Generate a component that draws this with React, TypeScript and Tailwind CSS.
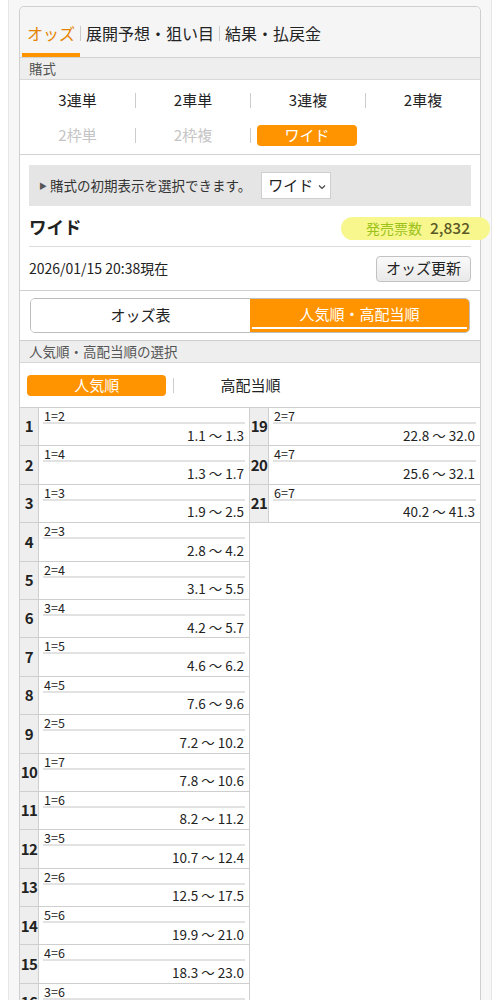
import React from "react";

const FONT = { fontFamily: '"Noto Sans CJK JP", "Noto Sans", sans-serif' };

type Row = { rank: number; combo: string; odds: string };

const left: Row[] = [
  { rank: 1, combo: "1=2", odds: "1.1 〜 1.3" },
  { rank: 2, combo: "1=4", odds: "1.3 〜 1.7" },
  { rank: 3, combo: "1=3", odds: "1.9 〜 2.5" },
  { rank: 4, combo: "2=3", odds: "2.8 〜 4.2" },
  { rank: 5, combo: "2=4", odds: "3.1 〜 5.5" },
  { rank: 6, combo: "3=4", odds: "4.2 〜 5.7" },
  { rank: 7, combo: "1=5", odds: "4.6 〜 6.2" },
  { rank: 8, combo: "4=5", odds: "7.6 〜 9.6" },
  { rank: 9, combo: "2=5", odds: "7.2 〜 10.2" },
  { rank: 10, combo: "1=7", odds: "7.8 〜 10.6" },
  { rank: 11, combo: "1=6", odds: "8.2 〜 11.2" },
  { rank: 12, combo: "3=5", odds: "10.7 〜 12.4" },
  { rank: 13, combo: "2=6", odds: "12.5 〜 17.5" },
  { rank: 14, combo: "5=6", odds: "19.9 〜 21.0" },
  { rank: 15, combo: "4=6", odds: "18.3 〜 23.0" },
  { rank: 16, combo: "3=6", odds: "20.6 〜 25.8" },
  { rank: 17, combo: "5=7", odds: "21.4 〜 28.7" },
  { rank: 18, combo: "3=7", odds: "22.1 〜 30.5" },
];

const right: Row[] = [
  { rank: 19, combo: "2=7", odds: "22.8 〜 32.0" },
  { rank: 20, combo: "4=7", odds: "25.6 〜 32.1" },
  { rank: 21, combo: "6=7", odds: "40.2 〜 41.3" },
];

function OddsRow({ r }: { r: Row }) {
  return (
    <div className="flex h-[38.4px] border-b border-[#cfcfcf]">
      <div className="w-[19px] shrink-0 bg-[#eeeeee] border-r border-[#cfcfcf] flex items-center justify-center text-[15px] font-bold text-[#222] tracking-[-0.5px]">
        {r.rank}
      </div>
      <div className="flex-1 flex flex-col px-[4px]">
        <div className="h-[16px] text-[12.5px] leading-[16px] text-[#222] border-b-2 border-[#e2e2e2] pl-[1px]">
          {r.combo}
        </div>
        <div className="flex-1 flex items-center justify-end text-[13.5px] text-[#222] pr-[1px]">
          {r.odds}
        </div>
      </div>
    </div>
  );
}

function Sep() {
  return <span className="w-px h-[15px] bg-[#cccccc]" />;
}

export default function App() {
  return (
    <div className="min-h-[1000px] bg-white px-[8px]" style={FONT}>
      <div className="min-h-[1000px] bg-[#f7f7f7] border-x border-[#e6e6e6] px-[10px] pt-[6px]">
        <div className="bg-white border border-[#cfcfcf] rounded-t-[5px] min-h-[1000px] overflow-visible">
          {/* Tabs */}
          <div className="h-[51px] bg-[#f5f5f5] border-b border-[#d3d3d3] rounded-t-[5px] flex items-stretch pl-[2px]">
            <div className="pt-[6px] px-[5px] border-b-4 border-[#ff9400] flex items-center text-[16px] text-[#e48400]">
              オッズ
            </div>
            <div className="flex items-center pt-[2px]"><Sep /></div>
            <div className="pt-[6px] px-[5px] border-b-4 border-transparent flex items-center text-[16px] text-[#222]">
              展開予想・狙い目
            </div>
            <div className="flex items-center pt-[2px]"><Sep /></div>
            <div className="pt-[6px] px-[5px] border-b-4 border-transparent flex items-center text-[16px] text-[#222]">
              結果・払戻金
            </div>
          </div>

          {/* 賭式 header */}
          <div className="h-[22px] bg-[#eeeeee] border-b border-[#d8d8d8] flex items-center px-[9px] text-[13.5px] text-[#555]">
            賭式
          </div>

          {/* Bet types */}
          <div className="h-[75px] border-b border-[#d3d3d3] pt-[3px]">
            <div className="grid grid-cols-4 h-[35px] items-center text-[15px] text-[#222]">
              <div className="flex justify-center">3連単</div>
              <div className="flex items-center"><Sep /><span className="flex-1 text-center">2車単</span></div>
              <div className="flex items-center"><Sep /><span className="flex-1 text-center">3連複</span></div>
              <div className="flex items-center"><Sep /><span className="flex-1 text-center">2車複</span></div>
            </div>
            <div className="grid grid-cols-4 h-[35px] items-center text-[15px]">
              <div className="flex justify-center text-[#c4c4c4]">2枠単</div>
              <div className="flex items-center text-[#c4c4c4]"><Sep /><span className="flex-1 text-center">2枠複</span></div>
              <div className="flex items-center">
                <Sep />
                <span className="flex-1 ml-[6px] mr-[8px] h-[21px] rounded-[4px] bg-[#ff9400] text-white flex items-center justify-center">
                  ワイド
                </span>
              </div>
              <div />
            </div>
          </div>

          {/* Select area */}
          <div className="h-[136px] border-b border-[#cfcfcf] px-[9px] pt-[10px]">
            <div className="h-[41px] bg-[#e5e5e5] flex items-center pl-[10px]">
              <span className="text-[8px] text-[#555] mr-[3px]">▶</span>
              <span className="text-[13.5px] text-[#333]">賭式の初期表示を選択できます。</span>
              <div className="ml-[10px] h-[27px] w-[70px] bg-white border border-[#cfcfcf] flex items-center pl-[6px] text-[15px] text-[#222]">
                ワイド
                <svg width="10" height="10" viewBox="0 0 10 10" className="ml-[4px] mt-[2px]">
                  <path d="M2 3.5 L5 6.5 L8 3.5" fill="none" stroke="#444" strokeWidth="1.2" />
                </svg>
              </div>
            </div>
            <div className="h-[41px] flex items-center justify-between border-b border-[#dddddd]">
              <span className="text-[17.5px] font-bold text-[#222] pt-[3px]">ワイド</span>
              <span className="-mr-[19px] mt-[4px] h-[23px] pl-[25px] pr-[20px] rounded-full bg-[#f8f78e] flex items-center">
                <span className="text-[14px] text-[#9cc21a]">発売票数</span>
                <span className="ml-[8px] text-[15.5px] font-medium text-[#5a5826]">2,832</span>
              </span>
            </div>
            <div className="h-[43px] flex items-center justify-between">
              <span className="text-[14px] text-[#222]">2026/01/15 20:38現在</span>
              <button className="h-[26px] w-[95px] rounded-[4px] border border-[#c2c2c2] bg-gradient-to-b from-[#fafafa] to-[#e9e9e9] text-[15px] text-[#222] flex items-center justify-center">
                オッズ更新
              </button>
            </div>
          </div>

          {/* Toggle */}
          <div className="h-[50px] border-b border-[#cfcfcf] px-[10px] pt-[7px]">
            <div className="h-[35px] rounded-[5px] border border-[#bdbdbd] flex overflow-hidden">
              <div className="flex-1 flex items-center justify-center text-[15px] text-[#222] bg-white">
                オッズ表
              </div>
              <div className="flex-1 flex flex-col bg-[#ff9400]">
                <div className="flex-1 flex items-center justify-center text-[15px] text-white pt-[2px]">
                  人気順・高配当順
                </div>
                <div className="h-[2px] bg-white mx-[2px] mb-[3px]" />
              </div>
            </div>
          </div>

          {/* header 2 */}
          <div className="h-[22px] bg-[#eeeeee] border-b border-[#d8d8d8] flex items-center px-[9px] text-[13.5px] text-[#555]">
            人気順・高配当順の選択
          </div>

          {/* popularity selector */}
          <div className="h-[44px] grid grid-cols-3 items-center">
            <div className="flex items-center pl-[7px] pr-[7px]">
              <span className="flex-1 h-[21px] rounded-[4px] bg-[#ff9400] text-white text-[15px] flex items-center justify-center">
                人気順
              </span>
            </div>
            <div className="flex items-center">
              <Sep />
              <span className="flex-1 text-center text-[15px] text-[#222]">高配当順</span>
            </div>
            <div />
          </div>

          {/* table */}
          <div className="grid grid-cols-2 border-t border-[#cfcfcf] items-start">
            <div className="border-r border-[#cfcfcf] self-stretch">
              {left.map((r) => (
                <OddsRow key={r.rank} r={r} />
              ))}
            </div>
            <div className="border-l border-[#cfcfcf] -ml-px">
              {right.map((r) => (
                <OddsRow key={r.rank} r={r} />
              ))}
            </div>
          </div>
        </div>
      </div>
    </div>
  );
}
